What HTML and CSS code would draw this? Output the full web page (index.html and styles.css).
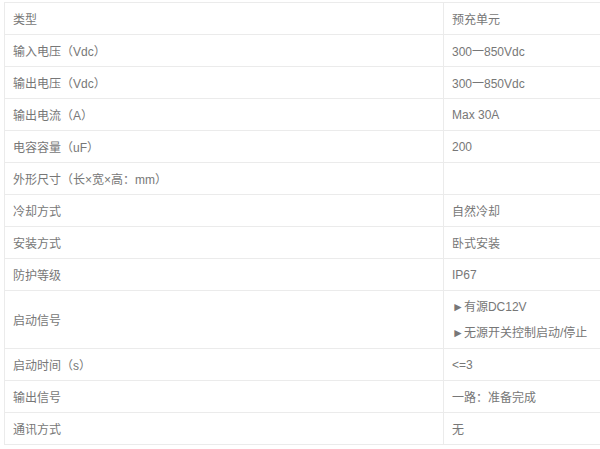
FILE: index.html
```html
<!DOCTYPE html>
<html lang="zh-CN">
<head>
  <meta charset="UTF-8">
  <meta name="viewport" content="width=device-width, initial-scale=1.0">
  <title>预充单元参数</title>
  <link rel="stylesheet" href="styles.css">
</head>
<body>

<div class="spec-wrap">
  <!-- 参数表 -->
  <table class="spec-table">
    <tr><td class="name">类型</td><td class="val">预充单元</td></tr>
    <tr><td class="name">输入电压（Vdc）</td><td class="val">300一850Vdc</td></tr>
    <tr><td class="name">输出电压（Vdc）</td><td class="val">300一850Vdc</td></tr>
    <tr><td class="name">输出电流（A）</td><td class="val">Max 30A</td></tr>
    <tr><td class="name">电容容量（uF）</td><td class="val">200</td></tr>
    <tr><td class="name">外形尺寸（长×宽×高：mm）</td><td class="val"></td></tr>
    <tr><td class="name">冷却方式</td><td class="val">自然冷却</td></tr>
    <tr><td class="name">安装方式</td><td class="val">卧式安装</td></tr>
    <tr><td class="name">防护等级</td><td class="val">IP67</td></tr>
    <tr class="tall">
      <td class="name">启动信号</td>
      <td class="val">
        <p>►有源DC12V</p>
        <p>►无源开关控制启动/停止</p>
      </td>
    </tr>
    <tr><td class="name">启动时间（s）</td><td class="val">&lt;=3</td></tr>
    <tr><td class="name">输出信号</td><td class="val">一路：准备完成</td></tr>
    <tr><td class="name">通讯方式</td><td class="val">无</td></tr>
  </table>
</div>

</body>
</html>
```

FILE: styles.css
```css
body {
  margin: 0;
  padding: 0;
  background: #fff;
  font-family: "Liberation Sans", Arial, "Noto Sans CJK SC", sans-serif;
}

.spec-wrap {
  padding: 2px 0 0 4px;
  overflow: hidden;
}

.spec-table {
  border-collapse: collapse;
  width: 600px;
  table-layout: fixed;
}

.spec-table td {
  border: 1px solid #ebebeb;
  padding: 0 8px;
  font-size: 12px;
  color: #777;
  vertical-align: middle;
  box-sizing: border-box;
  height: 32px;
}

.spec-table td.name {
  width: 439px;
}

.spec-table tr.tall td {
  height: 58px;
}

.spec-table td p {
  margin: 0;
  line-height: 26px;
}
```
